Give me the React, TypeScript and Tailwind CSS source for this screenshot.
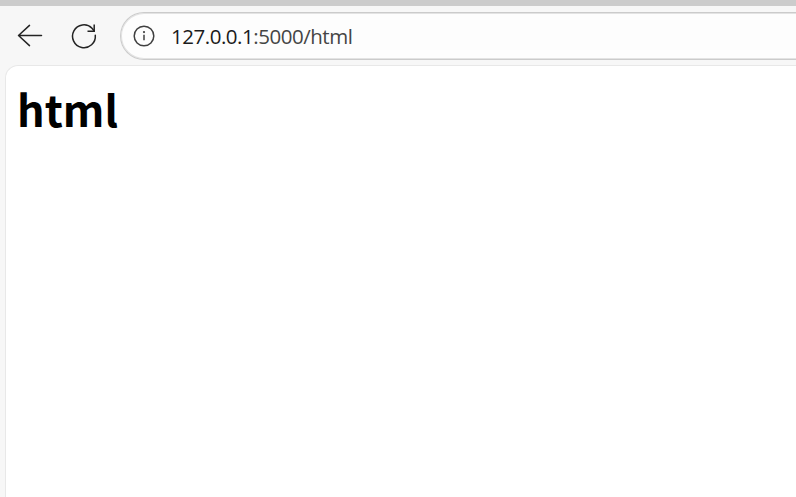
function BackIcon() {
  return (
    <svg className="size-7" viewBox="0 0 28 28" fill="none" stroke="#242424" strokeWidth="1.5" strokeLinecap="round" strokeLinejoin="round" aria-label="Back">
      <path d="M25.5 13.5H2.5M13.5 3.4L2.5 13.5L13.5 23.6" />
    </svg>
  );
}

function ReloadIcon() {
  return (
    <svg className="size-7" viewBox="0 0 28 28" fill="none" stroke="#242424" strokeWidth="1.5" strokeLinecap="round" aria-label="Reload">
      <path d="M25.3 13.2A11.4 11.4 0 1 1 22 6.2L24.2 9" />
      <path d="M24.2 2.6V9.3H17.5" strokeLinecap="butt" />
    </svg>
  );
}

function InfoIcon() {
  return (
    <svg className="size-6" viewBox="0 0 24 24" fill="none" stroke="#404040" strokeWidth="1.5" aria-label="Site information">
      <circle cx="12" cy="12" r="9.8" />
      <path d="M12 10.7V16.2" />
      <circle cx="12" cy="8.1" r="1.1" fill="#404040" stroke="none" />
    </svg>
  );
}

export default function App() {
  return (
    <div className="flex h-screen w-full flex-col overflow-hidden bg-[#f7f7f7]">
      <div className="h-1.5 shrink-0 bg-[#cccccc]" />
      <header className="flex h-[59px] shrink-0 items-center pl-4">
        <button className="shrink-0">
          <BackIcon />
        </button>
        <button className="ml-[26px] shrink-0">
          <ReloadIcon />
        </button>
        <div className="-mr-1 ml-[22px] flex h-12 flex-1 items-center rounded-l-full border border-r-0 border-[#cbcbcb] bg-[#fdfdfd] pl-[11px] shadow-[inset_0_0_0_1px_#e3e3e3]">
          <InfoIcon />
          <span className="ml-[15px] whitespace-nowrap font-['Open_Sans','Noto_Sans',sans-serif] text-[20.5px] leading-7 tracking-[-0.47px] text-[#454545]">
            <span className="text-[#1b1b1b]">127.0.0.1</span>:5000/html
          </span>
        </div>
      </header>
      <main className="ml-[5px] flex-1 rounded-tl-[13px] border-t border-l border-[#e8e8e8] bg-white pt-[9px] pl-[11px]">
        <h1 className="font-['Noto_Sans_CJK_SC',sans-serif] text-[43.2px] leading-[66px] font-bold text-black">html</h1>
      </main>
    </div>
  );
}
